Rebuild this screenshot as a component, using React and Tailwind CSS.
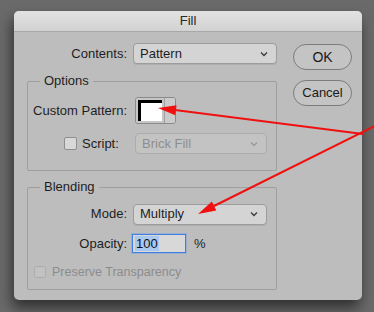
const Chevron = ({ color = "#444" }) => (
  <svg width="8" height="6" viewBox="0 0 8 6" fill="none">
    <path d="M1 1.5 L4 4.5 L7 1.5" stroke={color} strokeWidth="1.3" />
  </svg>
);

function Select({ value, width, disabled }) {
  return (
    <div
      className={
        "h-[21px] rounded-[4px] border flex items-center justify-between pl-[6px] pr-[8px] " +
        (disabled
          ? "bg-[#c3c3c3] border-[#acacac] text-[#8e8e8e]"
          : "bg-[#d4d4d4] border-[#9c9c9c] text-[#1e1e1e] shadow-[0_1px_0_rgba(0,0,0,0.08)]")
      }
      style={{ width }}
    >
      <span>{value}</span>
      <Chevron color={disabled ? "#9a9a9a" : "#3a3a3a"} />
    </div>
  );
}

function Group({ title, children, className = "" }) {
  return (
    <fieldset className={"border border-[#9f9f9f] rounded-[2px] " + className}>
      <legend className="ml-[12px] px-[4px] leading-[16px] text-[#1e1e1e]">{title}</legend>
      {children}
    </fieldset>
  );
}

function Arrows() {
  return (
    <svg className="absolute inset-0 pointer-events-none" width="374" height="312">
      <line x1="363" y1="134" x2="175" y2="110" stroke="#f01010" strokeWidth="2" />
      <polygon points="158,108 175.3,115.3 176.5,105.3" fill="#f01010" />
      <line x1="377" y1="125" x2="214" y2="206" stroke="#f01010" strokeWidth="2" />
      <polygon points="198,214 216.3,210.5 211.9,201.5" fill="#f01010" />
    </svg>
  );
}

export default function App() {
  return (
    <div className="relative w-[374px] h-[312px] overflow-hidden bg-[#6a6a6a] pl-[14px] pt-[11px] font-['Liberation_Sans',Arial,sans-serif] text-[13px]">
      <div className="w-[348px] h-[289px] rounded-[5px] bg-[#bdbdbd] overflow-hidden shadow-[-2px_8px_14px_rgba(0,0,0,0.55)]">
        <div className="h-[21px] bg-gradient-to-b from-[#e2e2e2] to-[#d2d2d2] border-b border-[#a8a8a8] flex items-center justify-center text-[#2a2a2a]">
          Fill
        </div>
        <div className="flex">
          <div className="ml-[13px] w-[250px]">
            <div className="mt-[11px] flex items-center h-[21px]">
              <div className="w-[100px] text-right text-[#1e1e1e]">Contents:</div>
              <div className="ml-[6px]">
                <Select value="Pattern" width={144} />
              </div>
            </div>

            <Group title="Options" className="mt-[9px] pb-[16px]">
              <div className="mt-[8px] flex items-center h-[27px]">
                <div className="w-[99px] text-right text-[#1e1e1e]">Custom Pattern:</div>
                <div className="ml-[8px] flex h-[27px] w-[41px] rounded-[3px] border border-[#8a8a8a] bg-[#c6c6c6] overflow-hidden">
                  <div className="w-[28px] h-full p-[2px] bg-[#c6c6c6]">
                    <div className="w-full h-full bg-white border-t-[3px] border-l-[3px] border-black" />
                  </div>
                  <div className="flex-1 border-l border-[#a0a0a0] bg-[#cbcbcb]" />
                </div>
              </div>
              <div className="mt-[9px] flex items-center h-[21px]">
                <div className="w-[107px] flex items-center pl-[36px]">
                  <div className="w-[13px] h-[13px] rounded-[2px] border border-[#8e8e8e] bg-[#d8d8d8]" />
                  <span className="ml-[5px] text-[#1e1e1e]">Script:</span>
                </div>
                <Select value="Brick Fill" width={132} disabled />
              </div>
            </Group>

            <Group title="Blending" className="mt-[8px] pb-[11px]">
              <div className="mt-[8px] flex items-center h-[22px]">
                <div className="w-[99px] text-right text-[#1e1e1e]">Mode:</div>
                <div className="ml-[6px]">
                  <Select value="Multiply" width={134} />
                </div>
              </div>
              <div className="mt-[9px] flex items-center h-[19px]">
                <div className="w-[99px] text-right text-[#1e1e1e]">Opacity:</div>
                <div className="ml-[5px] w-[54px] h-[19px] border border-[#3f7fe0] bg-[#d8d8d8] flex items-center pl-[2px] shadow-[0_0_0_1px_rgba(90,150,240,0.35)]">
                  <span className="bg-[#a9c8f0] text-[#111] leading-[15px] px-[1px]">100</span>
                </div>
                <span className="ml-[8px] text-[#1e1e1e]">%</span>
              </div>
              <div className="mt-[13px] flex items-center h-[12px]">
                <div className="ml-[6px] w-[12px] h-[12px] rounded-[2px] border border-[#acacac] bg-[#c2c2c2]" />
                <span className="ml-[6px] text-[12.5px] text-[#8c8c8c]">Preserve Transparency</span>
              </div>
            </Group>
          </div>

          <div className="ml-[16px] w-[59px] flex flex-col">
            <div className="mt-[12px] h-[26px] rounded-full border border-[#7c7c7c] bg-[#c4c4c4] flex items-center justify-center text-[14px] text-[#1a1a1a]">
              OK
            </div>
            <div className="mt-[10px] h-[26px] rounded-full border border-[#7c7c7c] bg-[#c4c4c4] flex items-center justify-center text-[#1a1a1a]">
              Cancel
            </div>
          </div>
        </div>
      </div>
      <Arrows />
    </div>
  );
}
